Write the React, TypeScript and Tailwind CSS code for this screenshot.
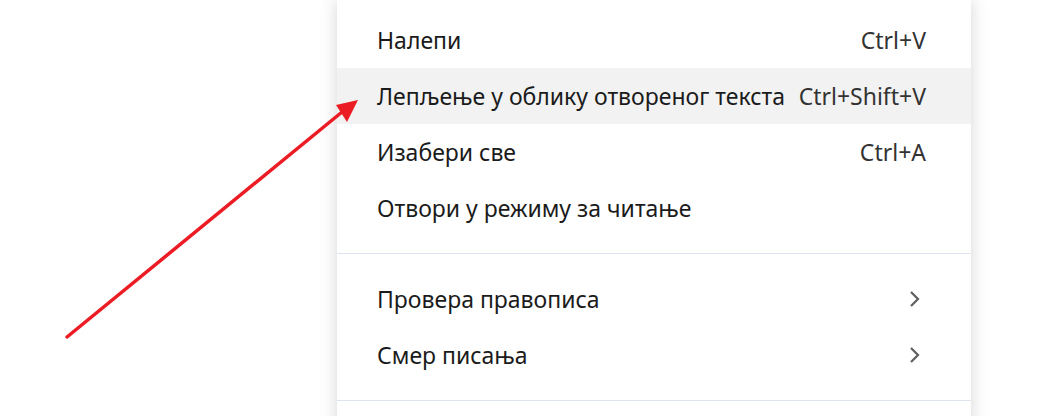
import React from "react";

type Item = { label: string; shortcut?: string; submenu?: boolean; active?: boolean };

const groups: Item[][] = [
  [
    { label: "Налепи", shortcut: "Ctrl+V" },
    { label: "Лепљење у облику отвореног текста", shortcut: "Ctrl+Shift+V", active: true },
    { label: "Изабери све", shortcut: "Ctrl+A" },
    { label: "Отвори у режиму за читање" },
  ],
  [
    { label: "Провера правописа", submenu: true },
    { label: "Смер писања", submenu: true },
  ],
];

function Chevron() {
  return (
    <svg width="12" height="18" viewBox="0 0 12 18" className="mr-[6px]">
      <path d="M3 2 L10 9 L3 16" fill="none" stroke="#5f5f5f" strokeWidth="2.2" />
    </svg>
  );
}

export default function App() {
  return (
    <div className="relative h-[416px] w-[1050px] overflow-hidden bg-white font-['Noto_Sans',sans-serif]">
      <div className="ml-[337px] w-[634px] bg-white pt-3 shadow-[0_0_16px_rgba(0,0,0,0.17)]">
        {groups.map((group, gi) => (
          <div key={gi} className={gi > 0 ? "border-t border-[#dde3f0] py-[17px]" : "pb-[17px]"}>
            {group.map((item) => (
              <div
                key={item.label}
                className={`flex h-14 items-center justify-between pl-10 pr-[45px] text-[23px] ${
                  item.active ? "bg-[#f2f2f2]" : ""
                }`}
              >
                <span className="text-[#1b1b1b]">{item.label}</span>
                {item.shortcut && <span className="text-[#333]">{item.shortcut}</span>}
                {item.submenu && <Chevron />}
              </div>
            ))}
          </div>
        ))}
        <div className="h-12 border-t border-[#dde3f0]" />
      </div>
      <svg className="pointer-events-none absolute left-0 top-0" width="1050" height="416">
        <line x1="67" y1="337" x2="342" y2="112" stroke="#ec1c24" strokeWidth="3.5" strokeLinecap="round" />
        <polygon points="358,100 336,105 347,122" fill="#ec1c24" />
      </svg>
    </div>
  );
}
